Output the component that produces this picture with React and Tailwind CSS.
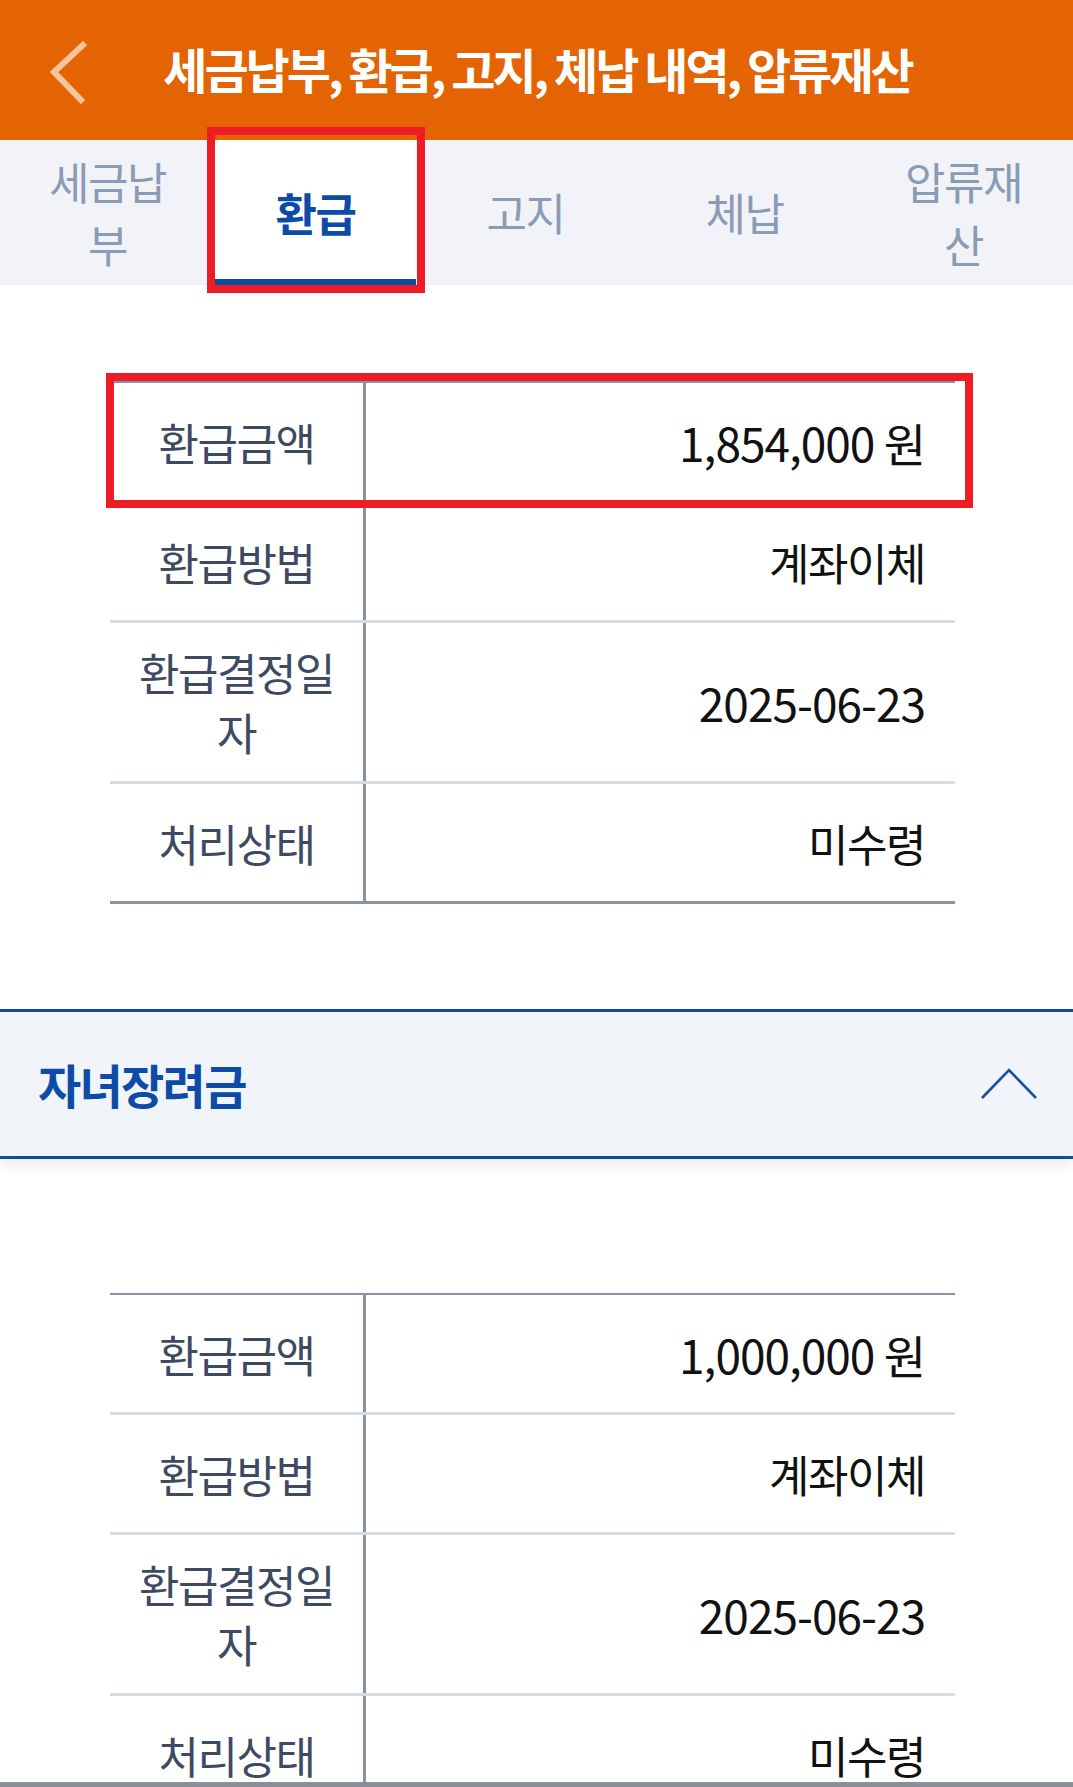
import React from 'react';

const font = { fontFamily: '"Noto Sans CJK KR", "Noto Sans", sans-serif' };

const tabs = ['세금납부', '환급', '고지', '체납', '압류재산'];

const refund = [
  { label: '환급금액', value: '1,854,000 원', num: true },
  { label: '환급방법', value: '계좌이체' },
  { label: '환급결정일자', value: '2025-06-23', num: true },
  { label: '처리상태', value: '미수령' },
];

const childCredit = [
  { label: '환급금액', value: '1,000,000 원', num: true },
  { label: '환급방법', value: '계좌이체' },
  { label: '환급결정일자', value: '2025-06-23', num: true },
  { label: '처리상태', value: '미수령' },
];

function InfoTable({ rows }) {
  return (
    <div className="ml-[110px] w-[845px] border-t-2 border-[#8A93A3]">
      {rows.map((row, i) => (
        <div
          key={i}
          className={
            'flex min-h-[120px] border-b-[3px] ' +
            (i === rows.length - 1 ? 'border-[#8A93A3]' : 'border-[#D6DCE4]')
          }
        >
          <div className="flex w-[256px] shrink-0 items-center justify-center border-r-[3px] border-[#8A93A3] px-[20px] py-[19px] text-center text-[44px] leading-[60px] tracking-[-1.5px] text-[#3E4A62]">
            {row.label}
          </div>
          <div
            className={
              'flex flex-1 items-center justify-end pr-[30px] leading-[60px] text-[#111111] ' +
              (row.num ? 'text-[46px] tracking-[-1px]' : 'text-[44px] tracking-[-1.5px]')
            }
          >
            {row.value}
          </div>
        </div>
      ))}
    </div>
  );
}

export default function App() {
  return (
    <div className="relative h-[1787px] w-[1073px] overflow-hidden bg-white" style={font}>
      {/* top bar */}
      <div className="relative flex h-[140px] items-center justify-center bg-[#E46302]">
        <svg className="absolute left-[46px] top-[40px]" width="44" height="66" viewBox="0 0 44 66">
          <polyline points="37,5 8,32 35,60" fill="none" stroke="#F9C49B" strokeWidth="6" strokeLinecap="square" />
        </svg>
        <h1 className="pb-[4px] pl-[2px] text-[48px] font-bold tracking-[-3px] text-white">
          세금납부, 환급, 고지, 체납 내역, 압류재산
        </h1>
      </div>

      {/* tabs */}
      <div className="grid h-[145px] grid-cols-[215px_201px_1fr_1fr_1fr] bg-[#F1F3F8]">
        {tabs.map((t, i) =>
          i === 1 ? (
            <div
              key={t}
              className="flex items-center justify-center border-b-[6px] border-[#0D4CA6] bg-white pt-[6px] text-[45px] font-bold tracking-[-1.5px] text-[#0D4CA6]"
            >
              {t}
            </div>
          ) : (
            <div
              key={t}
              className="flex items-center justify-center px-[38px] text-center text-[44px] leading-[63px] tracking-[-1.5px] text-[#8A9BB5]"
            >
              {t}
            </div>
          )
        )}
      </div>

      <div className="h-[96px]" />
      <InfoTable rows={refund} />

      <div className="h-[105px]" />
      <div className="flex h-[150px] items-center justify-between border-y-[3px] border-[#0E4C9E] bg-[#F1F4F9] pl-[38px] pr-[36px] shadow-[0_8px_12px_rgba(0,0,0,0.07)]">
        <span className="text-[47px] font-bold tracking-[-1.7px] text-[#0D4CA6]">자녀장려금</span>
        <svg width="56" height="32" viewBox="0 0 56 32">
          <polyline points="1,30 28,2 55,30" fill="none" stroke="#1A4FA0" strokeWidth="2.6" />
        </svg>
      </div>

      <div className="h-[134px]" />
      <InfoTable rows={childCredit} />

      {/* bottom edge line */}
      <div className="absolute bottom-0 left-0 h-[5px] w-full bg-[#8A8F99]" />

      {/* red highlight boxes */}
      <div className="absolute left-[207px] top-[127px] h-[166px] w-[218px] border-[8px] border-[#EE1C25]" />
      <div className="absolute left-[106px] top-[373px] h-[135px] w-[867px] border-[8px] border-[#EE1C25]" />
    </div>
  );
}
